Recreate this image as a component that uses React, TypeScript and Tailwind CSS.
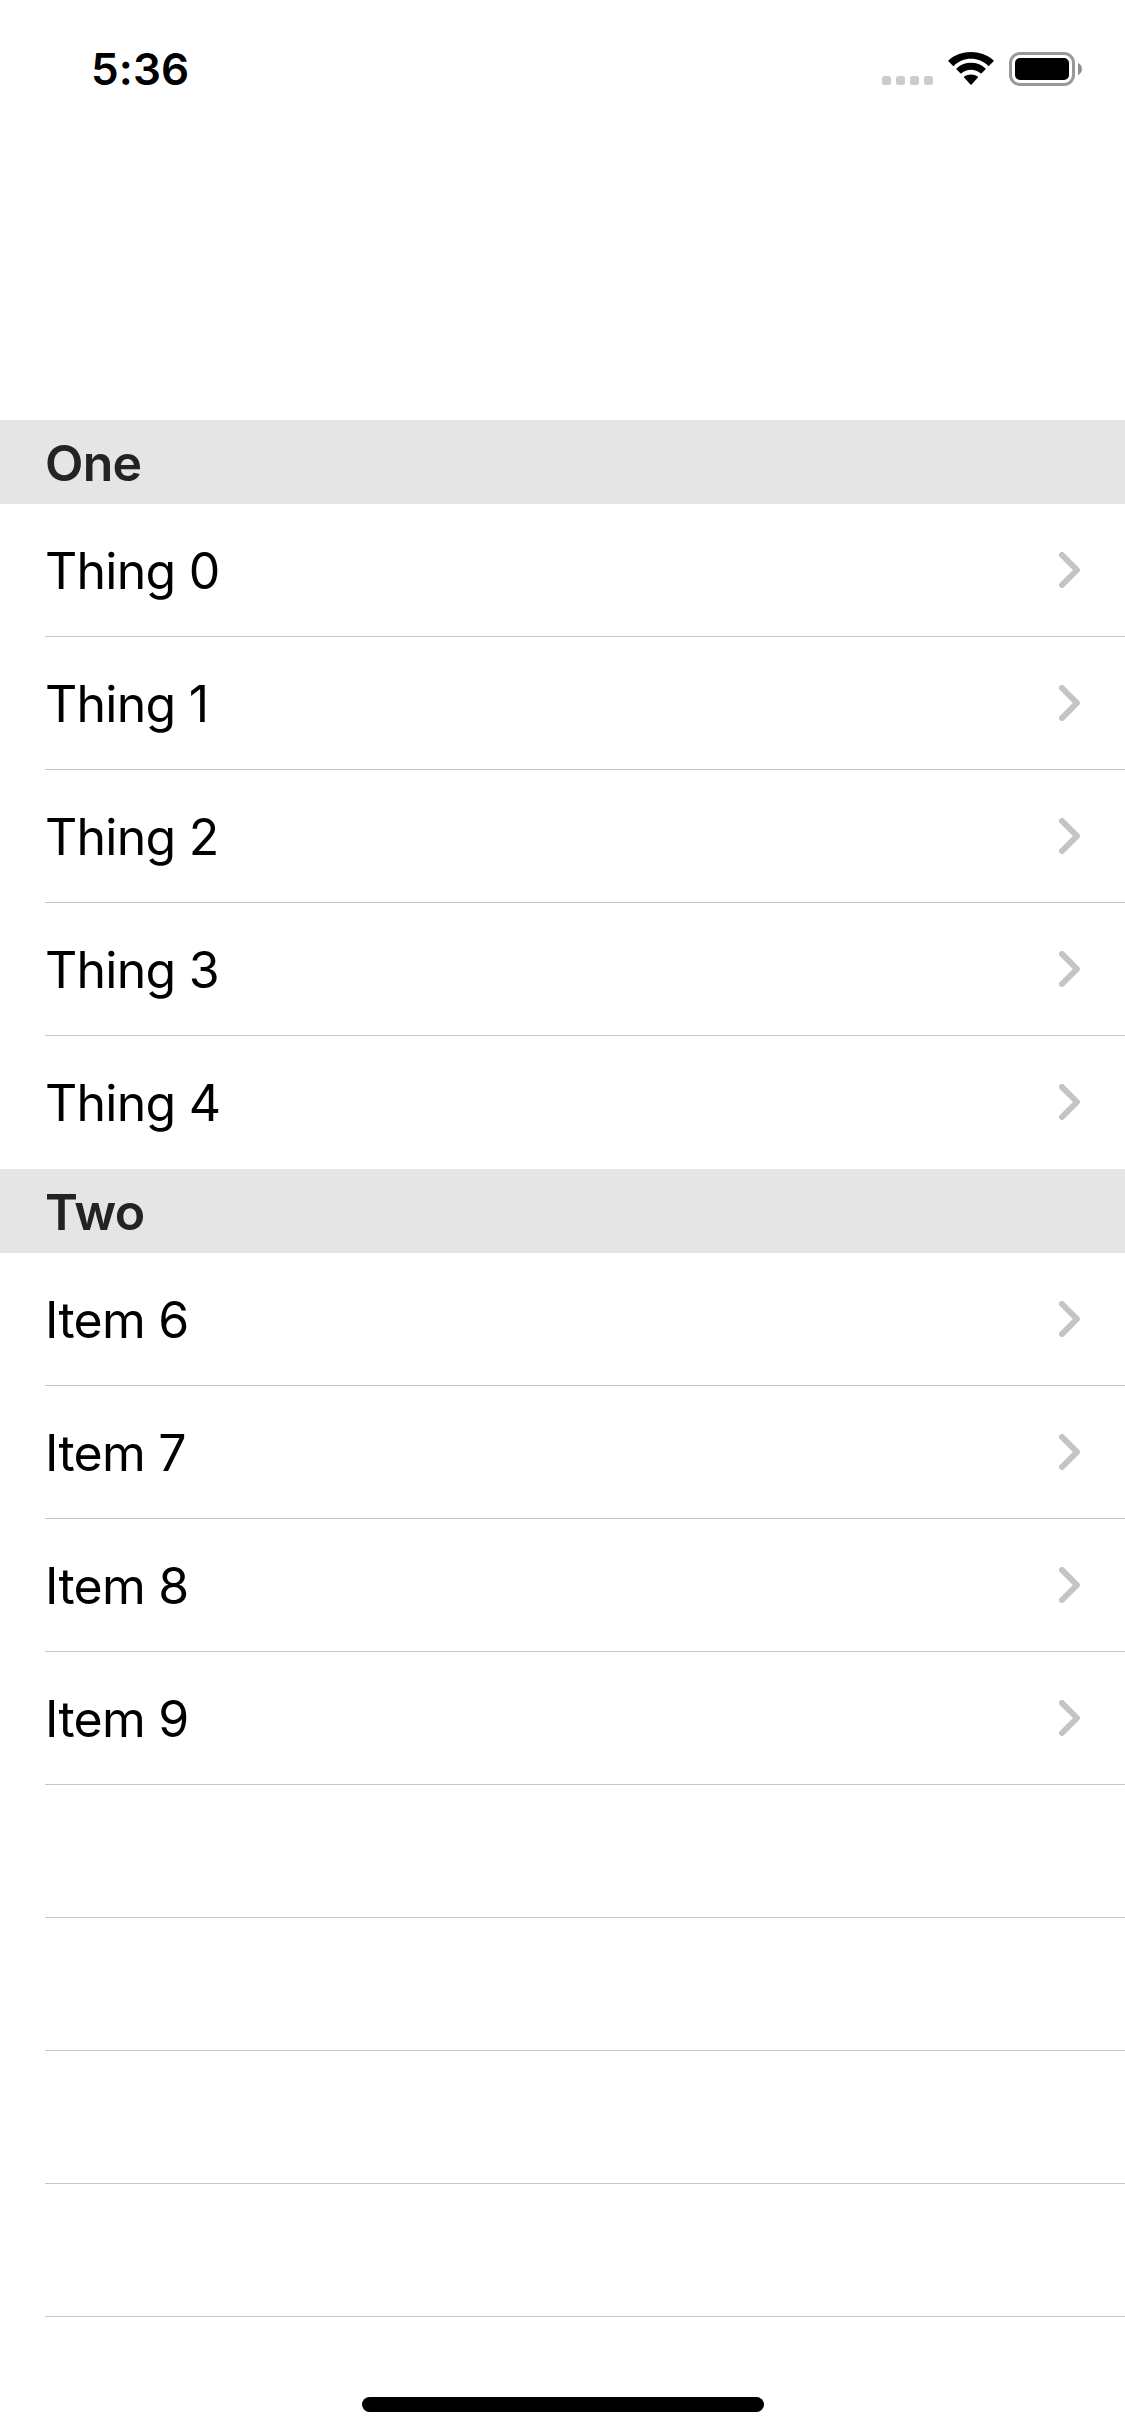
const sections = [
  { title: 'One', items: ['Thing 0', 'Thing 1', 'Thing 2', 'Thing 3', 'Thing 4'], emptyRows: 0 },
  { title: 'Two', items: ['Item 6', 'Item 7', 'Item 8', 'Item 9'], emptyRows: 4 },
];

function SignalDots() {
  return (
    <div className="mt-[24px] flex gap-[5px]">
      {[0, 1, 2, 3].map((dot) => (
        <span key={dot} className="size-[9px] rounded-[2.5px] bg-[#cccccc]" />
      ))}
    </div>
  );
}

function WifiIcon() {
  return (
    <svg className="ml-[15px] h-[33px] w-[46px]" viewBox="0 0 46 33" fill="#000">
      <path d="M23 6.8C29.4 6.8 35.4 9.2 40 13.7Q40.6 14.2 41.1 13.7L45.4 9.5Q46 8.8 45.4 8.2C33 -2.7 13 -2.7 0.6 8.2Q0 8.8 0.6 9.5L4.9 13.7Q5.4 14.2 6 13.7C10.6 9.2 16.6 6.8 23 6.8Z" />
      <path d="M23 17.7C26.5 17.7 29.9 19 32.5 21.3Q33.1 21.8 33.6 21.3L37.4 17.6Q38 16.9 37.3 16.3C29.4 9 16.6 9 8.7 16.3Q8 16.9 8.6 17.6L12.4 21.3Q12.9 21.8 13.5 21.3C16.1 19 19.5 17.7 23 17.7Z" />
      <path d="M29.9 25.5Q30.3 25 29.8 24.6C25.9 21.7 20.1 21.7 16.2 24.6Q15.7 25 16.1 25.5L22.4 32.5Q23 33 23.6 32.5Z" />
    </svg>
  );
}

function BatteryIcon() {
  return (
    <div className="ml-[15px] flex items-center">
      <div className="h-[34px] w-[66px] rounded-[11px] border-[3px] border-[#999999] p-[3px]">
        <div className="h-full w-full rounded-[5px] bg-black" />
      </div>
      <svg className="ml-[3px] h-[12px] w-[4px]" viewBox="0 0 4 12" fill="#8f8f8f">
        <path d="M0 0C5.3 2 5.3 10 0 12Z" />
      </svg>
    </div>
  );
}

function StatusBar() {
  return (
    <header className="flex h-[420px] items-start justify-between pl-[91px] pr-[43px] pt-[52px]">
      <div className="mt-[-9px] text-[44px] font-semibold leading-[53px] tracking-[0.1px]">5:36</div>
      <div className="flex items-start">
        <SignalDots />
        <WifiIcon />
        <BatteryIcon />
      </div>
    </header>
  );
}

function Chevron() {
  return (
    <svg className="h-[36px] w-[22px]" viewBox="0 0 22 36" fill="none" stroke="#c4c4c6" strokeWidth="6" strokeLinecap="round" strokeLinejoin="round">
      <path d="M3 3 L18 18 L3 33" />
    </svg>
  );
}

function Row({ label, divider }: { label?: string; divider: boolean }) {
  return (
    <li className="h-[133px] pl-[45px]">
      <div className={`flex h-full items-center justify-between border-b pr-[44px] ${divider ? 'border-[#c6c6c8]' : 'border-transparent'}`}>
        {label && (
          <>
            <span className="pt-[2px] text-[50px] leading-[60px] tracking-[-0.75px]">{label}</span>
            <Chevron />
          </>
        )}
      </div>
    </li>
  );
}

export default function App() {
  return (
    <div className="flex h-[2436px] w-[1125px] flex-col overflow-hidden bg-white font-['Inter',sans-serif] text-black">
      <StatusBar />
      <main className="flex-1">
        {sections.map((section) => (
          <section key={section.title}>
            <h2 className="flex h-[84px] items-center bg-[#e5e5e5] pl-[45px] pt-[2px] text-[50px] font-semibold leading-[60px] tracking-[-0.7px] text-[#232323]">
              {section.title}
            </h2>
            <ul>
              {section.items.map((item, index) => (
                <Row key={item} label={item} divider={section.emptyRows > 0 || index < section.items.length - 1} />
              ))}
              {Array.from({ length: section.emptyRows }, (_, index) => (
                <Row key={index} divider />
              ))}
            </ul>
          </section>
        ))}
      </main>
      <footer className="flex justify-center pb-[24px]">
        <div className="h-[15px] w-[402px] rounded-full bg-black" />
      </footer>
    </div>
  );
}
